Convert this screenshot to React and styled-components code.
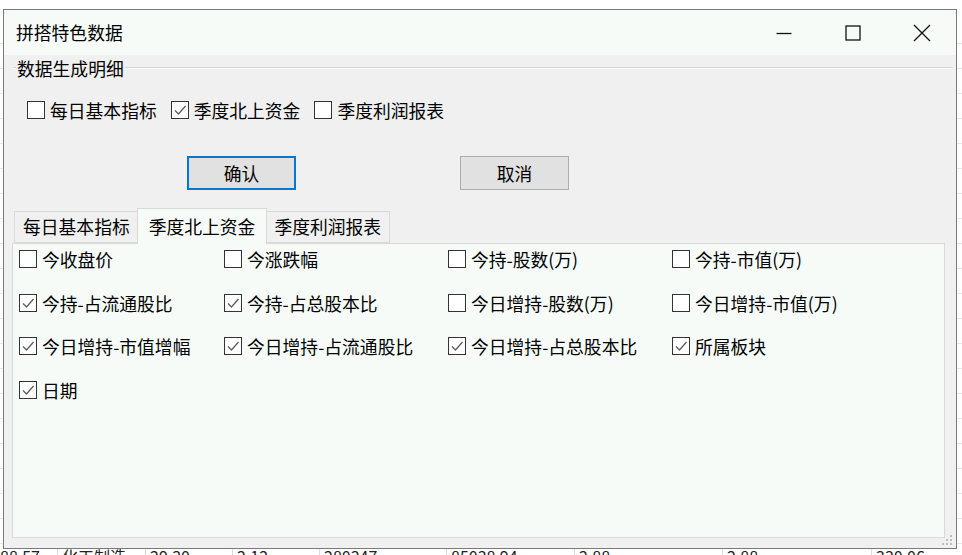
import React from "react";
import styled, { createGlobalStyle } from "styled-components";

const GlobalStyle = createGlobalStyle`
  html, body {
    margin: 0;
    padding: 0;
    background: #ffffff;
  }
  body {
    font-family: "Noto Sans CJK SC", "Noto Sans", sans-serif;
    color: #000;
  }
`;

const Desktop = styled.div`
  position: relative;
  width: 962px;
  height: 555px;
  overflow: hidden;
  background: #ffffff;
`;

const BgTable = styled.div`
  padding-top: 19px;
  margin-left: -4px;
  font-size: 16px;
  color: #222;
`;

const BgRow = styled.div`
  display: grid;
  grid-template-columns: 62px 88px 87px 87px 127px 128px 148px 149px 96px;
  height: 25px;
  border-bottom: 1px solid #e6e6e6;
  box-sizing: border-box;
`;

const BgCell = styled.div`
  padding-left: 4px;
  line-height: 25px;
  border-right: 1px solid #dcdcdc;
  white-space: nowrap;
  overflow: hidden;
`;

const Window = styled.div`
  position: absolute;
  left: 3px;
  top: 9px;
  width: 954px;
  height: 540px;
  box-sizing: border-box;
  border: 1px solid #7a7a7a;
  display: flex;
  flex-direction: column;
  background: #f0f0f0;
`;

const TitleBar = styled.div`
  height: 45px;
  flex: none;
  display: flex;
  align-items: center;
  background: #f6fbf8;
`;

const Title = styled.div`
  flex: 1;
  padding-left: 12px;
  font-size: 17.8px;
  line-height: 1;
`;

const CaptionButton = styled.div`
  width: 69px;
  height: 45px;
  display: flex;
  align-items: center;
  justify-content: center;
`;

const Body = styled.div`
  flex: 1;
  display: flex;
  flex-direction: column;
  padding: 0 11px 10px 8px;
  min-height: 0;
  position: relative;
`;

const GroupHeader = styled.div`
  margin-top: 3px;
  height: 20px;
  display: flex;
  align-items: center;
  margin-left: 1px;
  margin-right: -8px;
`;

const GroupLine = styled.div`
  height: 1px;
  background: #d5d5d5;
  border-bottom: 1px solid #ffffff;
  flex: ${(p) => (p.$grow ? 1 : "none")};
  width: ${(p) => (p.$grow ? "auto" : "3px")};
`;

const GroupLabel = styled.div`
  font-size: 17.8px;
  line-height: 20px;
  padding: 0 1px;
`;

const OptionRow = styled.div`
  margin-top: 23px;
  padding-left: 15px;
  display: flex;
  gap: 14px;
`;

const Check = styled.label`
  display: flex;
  align-items: center;
  gap: 5px;
  font-size: 17.8px;
  line-height: 18px;
  white-space: nowrap;
`;

const Box = styled.span`
  width: 18px;
  height: 18px;
  box-sizing: border-box;
  border: 1px solid #333333;
  background: #ffffff;
  display: flex;
  align-items: center;
  justify-content: center;
  flex: none;
`;

const ButtonRow = styled.div`
  margin-top: 37px;
  padding-left: 175px;
  display: flex;
  gap: 164px;
`;

const Button = styled.button`
  width: 109px;
  height: 34px;
  box-sizing: border-box;
  background: #e1e1e1;
  border: ${(p) => (p.$default ? "2px solid #0078d7" : "1px solid #adadad")};
  font-family: inherit;
  font-size: 17.8px;
  color: #000;
  padding: 0;
`;

const TabStrip = styled.div`
  margin-top: 17px;
  height: 36px;
  padding-left: 2px;
  display: flex;
  align-items: flex-end;
  flex: none;
`;

const Tab = styled.div`
  height: ${(p) => (p.$active ? "36px" : "32px")};
  box-sizing: border-box;
  padding: ${(p) => (p.$active ? "0 11px" : "0 8px")};
  margin: ${(p) => (p.$active ? "0 -2px -1px" : "0")};
  position: relative;
  z-index: ${(p) => (p.$active ? 2 : 1)};
  background: ${(p) => (p.$active ? "#f6fbf8" : "#f0f0f0")};
  border: 1px solid #d9d9d9;
  border-bottom: ${(p) => (p.$active ? "none" : "1px solid #d9d9d9")};
  display: flex;
  align-items: center;
  font-size: 17.8px;
  line-height: 1;
  white-space: nowrap;
`;

const Panel = styled.div`
  flex: 1;
  background: #f6fbf8;
  border: 1px solid #d9d9d9;
  padding: 6px 0 0 6px;
  display: grid;
  grid-template-columns: 205px 224px 224px 224px;
  grid-auto-rows: 43.5px;
  align-content: start;
  align-items: start;
`;

const Grip = styled.svg`
  position: absolute;
  right: 3px;
  bottom: 2px;
`;

const lastRow = ["88.57", "化工制造", "29.30", "2.12", "280347", "85038.94", "2.88", "2.88", "330.06"];
const bgRows = Array.from({ length: 22 }, (_, i) => (i === 21 ? lastRow : lastRow.map(() => "")));

const topOptions = [
  { label: "每日基本指标", checked: false },
  { label: "季度北上资金", checked: true },
  { label: "季度利润报表", checked: false },
];

const fields = [
  { label: "今收盘价", checked: false },
  { label: "今涨跌幅", checked: false },
  { label: "今持-股数(万)", checked: false },
  { label: "今持-市值(万)", checked: false },
  { label: "今持-占流通股比", checked: true },
  { label: "今持-占总股本比", checked: true },
  { label: "今日增持-股数(万)", checked: false },
  { label: "今日增持-市值(万)", checked: false },
  { label: "今日增持-市值增幅", checked: true },
  { label: "今日增持-占流通股比", checked: true },
  { label: "今日增持-占总股本比", checked: true },
  { label: "所属板块", checked: true },
  { label: "日期", checked: true },
];

const tabs = ["每日基本指标", "季度北上资金", "季度利润报表"];

const CheckBox = ({ label, checked }) => (
  <Check>
    <Box>
      {checked && (
        <svg width="14" height="14" viewBox="0 0 14 14">
          <path d="M2 7.5 L5.5 11 L12.5 3" fill="none" stroke="#606060" strokeWidth="1.4" />
        </svg>
      )}
    </Box>
    {label}
  </Check>
);

const App = () => {
  return (
    <Desktop>
      <GlobalStyle />
      <BgTable>
        {bgRows.map((row, i) => (
          <BgRow key={i}>
            {row.map((c, j) => (
              <BgCell key={j}>{c}</BgCell>
            ))}
          </BgRow>
        ))}
      </BgTable>

      <Window>
        <TitleBar>
          <Title>拼搭特色数据</Title>
          <CaptionButton>
            <svg width="16" height="16" viewBox="0 0 16 16">
              <path d="M0.5 8.5 H15.5" stroke="#111" strokeWidth="1.3" />
            </svg>
          </CaptionButton>
          <CaptionButton>
            <svg width="16" height="16" viewBox="0 0 16 16">
              <rect x="1" y="1" width="14" height="14" fill="none" stroke="#111" strokeWidth="1.3" />
            </svg>
          </CaptionButton>
          <CaptionButton>
            <svg width="18" height="18" viewBox="0 0 18 18">
              <path d="M1 1 L17 17 M17 1 L1 17" stroke="#111" strokeWidth="1.3" />
            </svg>
          </CaptionButton>
        </TitleBar>

        <Body>
          <GroupHeader>
            <GroupLine />
            <GroupLabel>数据生成明细</GroupLabel>
            <GroupLine $grow />
          </GroupHeader>

          <OptionRow>
            {topOptions.map((o) => (
              <CheckBox key={o.label} {...o} />
            ))}
          </OptionRow>

          <ButtonRow>
            <Button $default>确认</Button>
            <Button>取消</Button>
          </ButtonRow>

          <TabStrip>
            {tabs.map((t, i) => (
              <Tab key={t} $active={i === 1}>
                {t}
              </Tab>
            ))}
          </TabStrip>

          <Panel>
            {fields.map((f) => (
              <CheckBox key={f.label} {...f} />
            ))}
          </Panel>

          <Grip width="12" height="12" viewBox="0 0 12 12">
            {[
              [9, 1],
              [9, 5],
              [5, 5],
              [9, 9],
              [5, 9],
              [1, 9],
            ].map(([x, y]) => (
              <rect key={`${x}-${y}`} x={x} y={y} width="2" height="2" fill="#bcbcbc" />
            ))}
          </Grip>
        </Body>
      </Window>
    </Desktop>
  );
};

export default App;
